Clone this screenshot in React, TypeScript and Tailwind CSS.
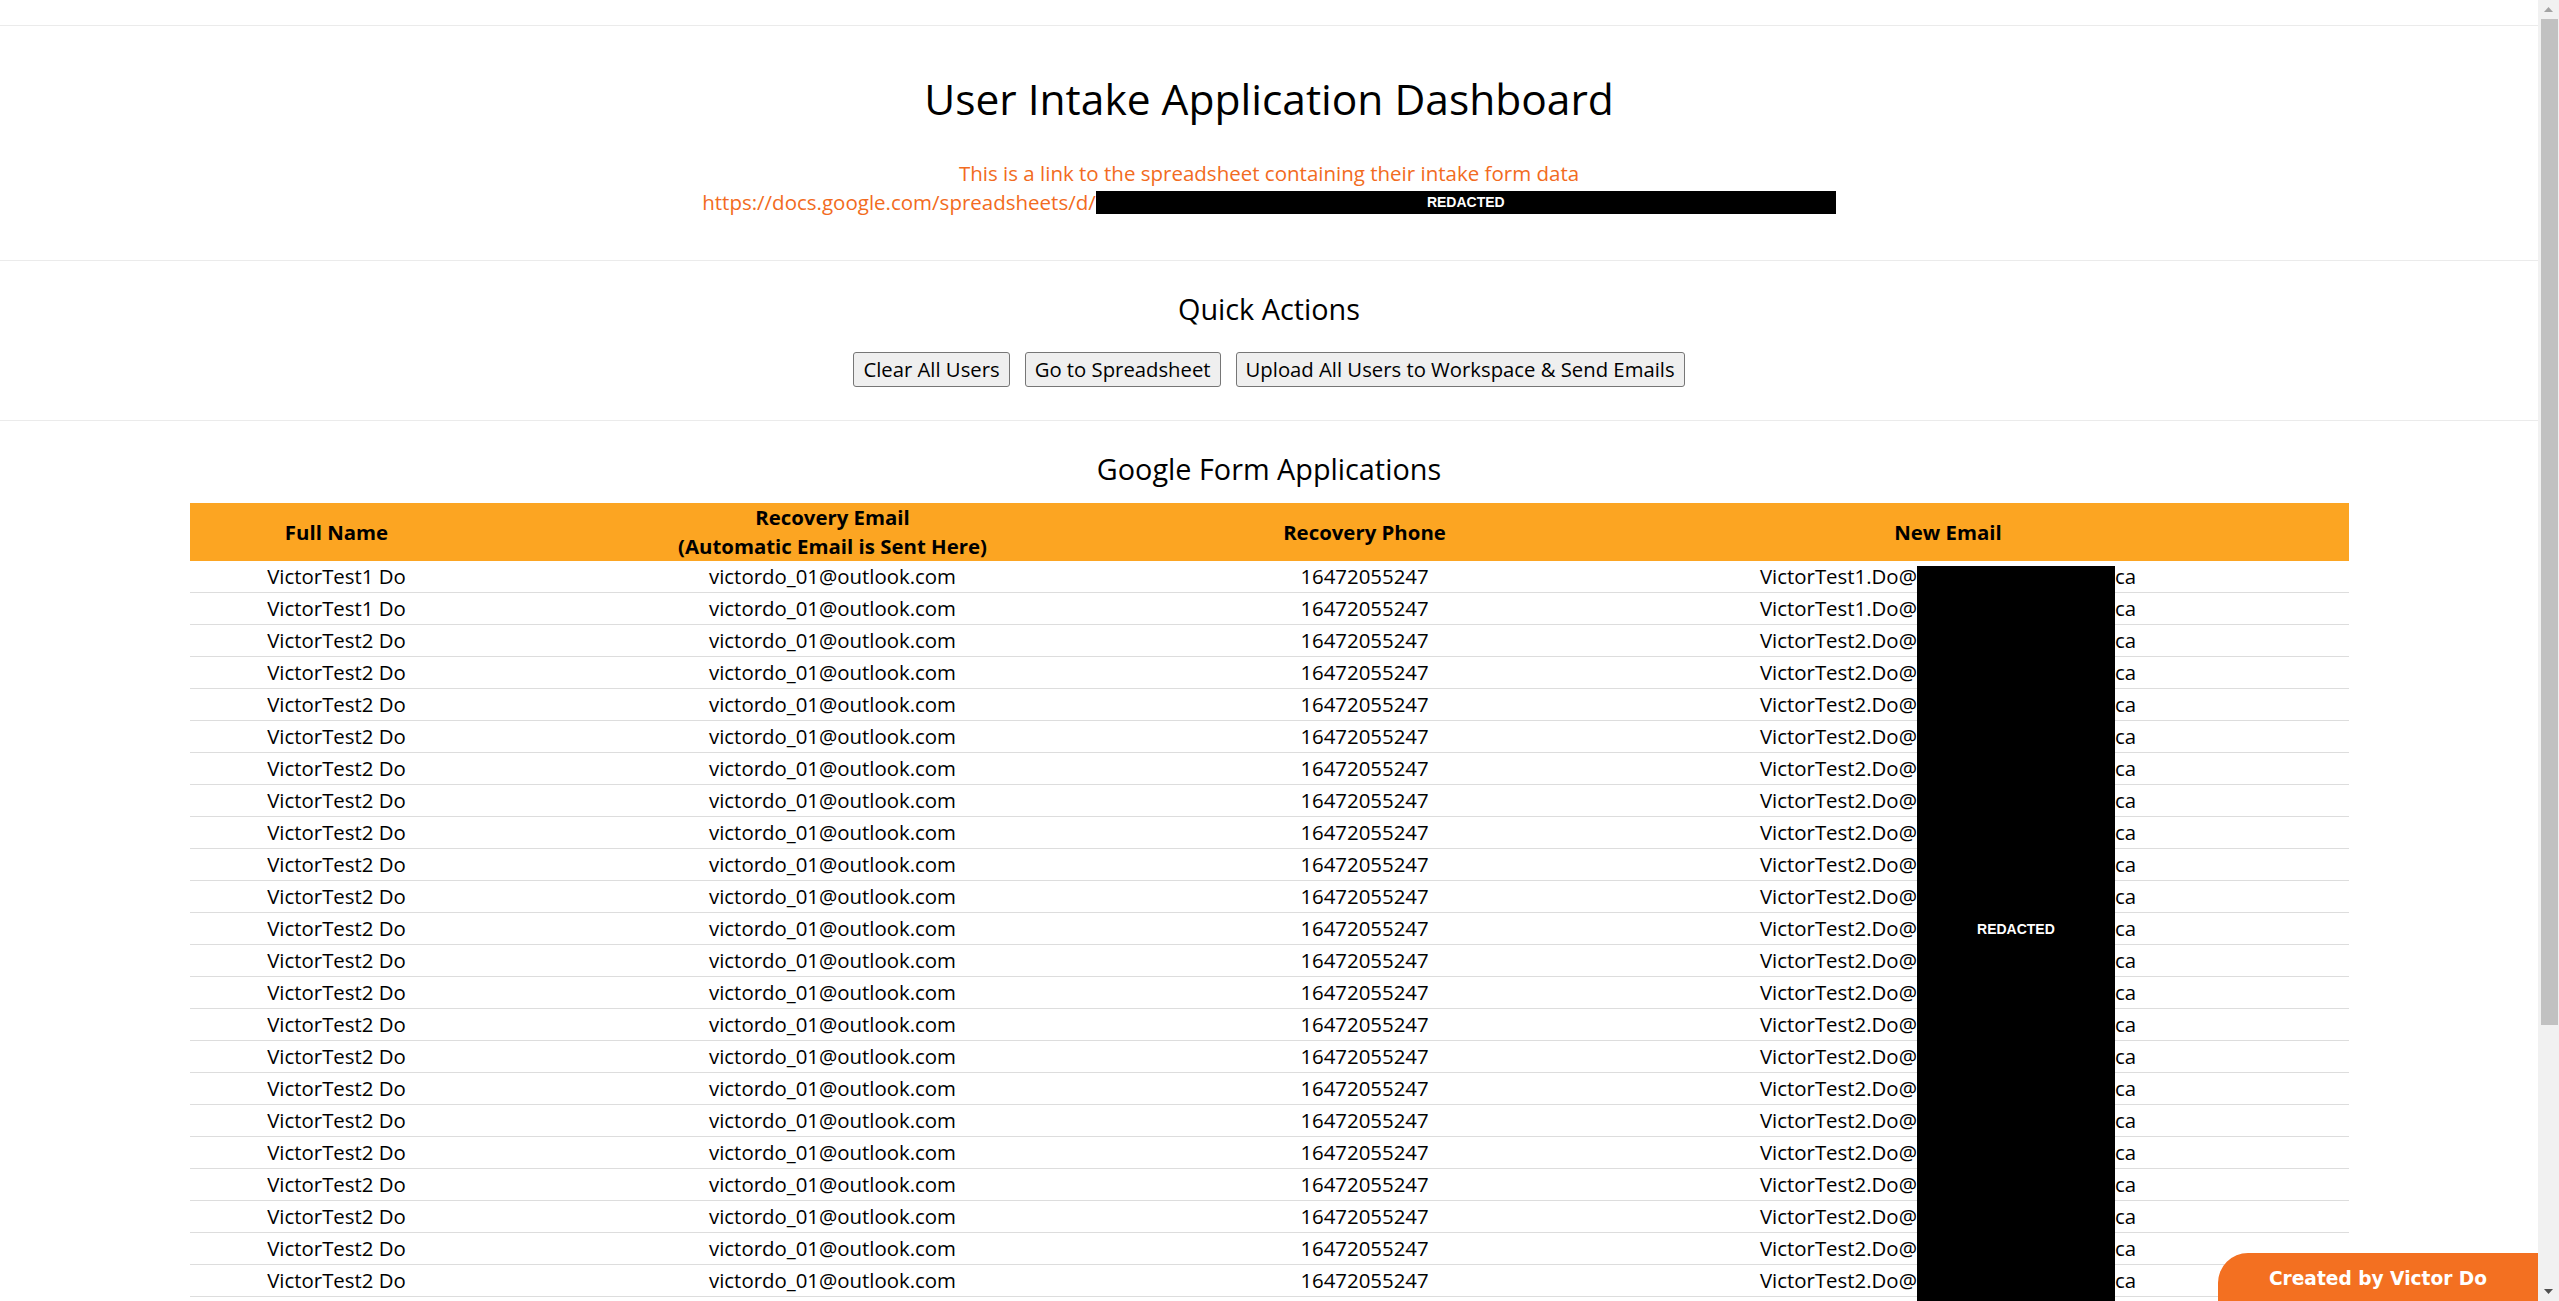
import React from 'react';

interface Applicant {
  full_name: string;
  recovery_email: string;
  recovery_phone: string;
  new_email_user: string;
}

const applicants: Applicant[] = [
  ...Array.from({ length: 2 }, () => ({
    full_name: 'VictorTest1 Do',
    recovery_email: 'victordo_01@outlook.com',
    recovery_phone: '16472055247',
    new_email_user: 'VictorTest1.Do@',
  })),
  ...Array.from({ length: 24 }, () => ({
    full_name: 'VictorTest2 Do',
    recovery_email: 'victordo_01@outlook.com',
    recovery_phone: '16472055247',
    new_email_user: 'VictorTest2.Do@',
  })),
];

const font = { fontFamily: '"Open Sans", "Noto Sans", sans-serif' };
const redactFont = { fontFamily: '"Liberation Sans", Arial, sans-serif' };

// fake page scrollbar, the screenshot was taken with one showing
const Scrollbar: React.FC = () => (
  <div className="flex h-full w-[21px] shrink-0 flex-col items-center bg-[#f1f1f1]">
    <div className="flex h-[19px] w-full items-center justify-center">
      <svg width="9" height="5" viewBox="0 0 9 5">
        <path d="M4.5 0 L9 5 L0 5 Z" fill="#a3a3a3" />
      </svg>
    </div>
    <div className="ml-[1px] h-[1006px] w-[17px] bg-[#c1c1c1]" />
    <div className="flex-1" />
    <div className="flex h-[19px] w-full items-center justify-center">
      <svg width="9" height="5" viewBox="0 0 9 5">
        <path d="M0 0 L9 0 L4.5 5 Z" fill="#505050" />
      </svg>
    </div>
  </div>
);

export default function App() {
  return (
    <div className="flex h-screen overflow-hidden bg-white text-black" style={font}>
      <main className="min-w-0 flex-1 overflow-hidden">
        <div className="h-[26px] border-b border-[#ebebeb]" />

        {/* header */}
        <section className="flex flex-col items-center pt-[47px] pb-[43px] border-b border-[#ebebeb]">
          <h1 className="text-[42.5px] leading-[52px] font-normal">User Intake Application Dashboard</h1>
          <p className="mt-[34px] text-[20.5px] leading-[29px] text-[#f26b21]">
            This is a link to the spreadsheet containing their intake form data
          </p>
          <p className="text-[20.5px] leading-[29px] text-[#f26b21] flex items-center">
            <span>https://docs.google.com/spreadsheets/d/</span>
            <span
              className="inline-flex h-[23px] w-[740px] items-center justify-center bg-black text-white text-[14px] font-bold"
              style={redactFont}
            >
              REDACTED
            </span>
          </p>
        </section>

        {/* quick actions */}
        <section className="flex flex-col items-center pt-[28px] pb-[33px] border-b border-[#ebebeb]">
          <h2 className="text-[28.8px] leading-[40px]">Quick Actions</h2>
          <div className="mt-[23px] flex gap-[15px]">
            <button className="h-[35px] px-[9px] text-[20.3px] leading-[27px] bg-[#efefef] border border-[#767676] rounded-[3px]">
              Clear All Users
            </button>
            <button className="h-[35px] px-[9px] text-[20.3px] leading-[27px] bg-[#efefef] border border-[#767676] rounded-[3px]">
              Go to Spreadsheet
            </button>
            <button className="h-[35px] px-[9px] text-[20.3px] leading-[27px] bg-[#efefef] border border-[#767676] rounded-[3px]">
              Upload All Users to Workspace &amp; Send Emails
            </button>
          </div>
        </section>

        {/* applications */}
        <section className="flex flex-col items-center pt-[28px] pb-10">
          <h2 className="text-[28.8px] leading-[40px]">Google Form Applications</h2>
          <table className="mt-[14px] w-[85%] table-fixed border-collapse text-[20.4px]">
            <colgroup>
              <col className="w-[294px]" />
              <col className="w-[698px]" />
              <col className="w-[366px]" />
              <col className="w-[801px]" />
            </colgroup>
            <thead>
              <tr className="bg-[#fca522] leading-[29px]">
                <th className="py-0 font-bold">Full Name</th>
                <th className="py-0 font-bold">
                  Recovery Email
                  <br />
                  (Automatic Email is Sent Here)
                </th>
                <th className="py-0 font-bold">Recovery Phone</th>
                <th className="py-0 font-bold">New Email</th>
              </tr>
            </thead>
            <tbody>
              {applicants.map((a, i) => (
                <tr key={i} className="border-b border-[#dddddd] leading-[29px]">
                  <td className="py-px text-center">{a.full_name}</td>
                  <td className="py-px text-center">{a.recovery_email}</td>
                  <td className="py-px text-center">{a.recovery_phone}</td>
                  <td className="py-px text-center whitespace-nowrap">
                    {a.new_email_user}
                    <span className="relative inline-block h-[29px] w-[198px] align-top">
                      <span
                        className={`absolute inset-x-0 -bottom-[2px] flex items-center justify-center bg-black text-white text-[14px] font-bold ${
                          i === 0 ? 'top-[4px]' : '-top-px'
                        }`}
                        style={redactFont}
                      >
                        {i === 11 ? 'REDACTED' : ''}
                      </span>
                    </span>
                    ca
                  </td>
                </tr>
              ))}
            </tbody>
          </table>
        </section>
      </main>

      <Scrollbar />

      <div
        className="fixed bottom-0 right-[21px] flex h-[48px] w-[320px] items-center justify-center rounded-tl-[30px] bg-[#f37021] pt-[4px] text-[18.6px] font-bold text-white"
        style={{ fontFamily: '"DejaVu Sans", Verdana, sans-serif' }}
      >
        Created by Victor Do
      </div>
    </div>
  );
}
